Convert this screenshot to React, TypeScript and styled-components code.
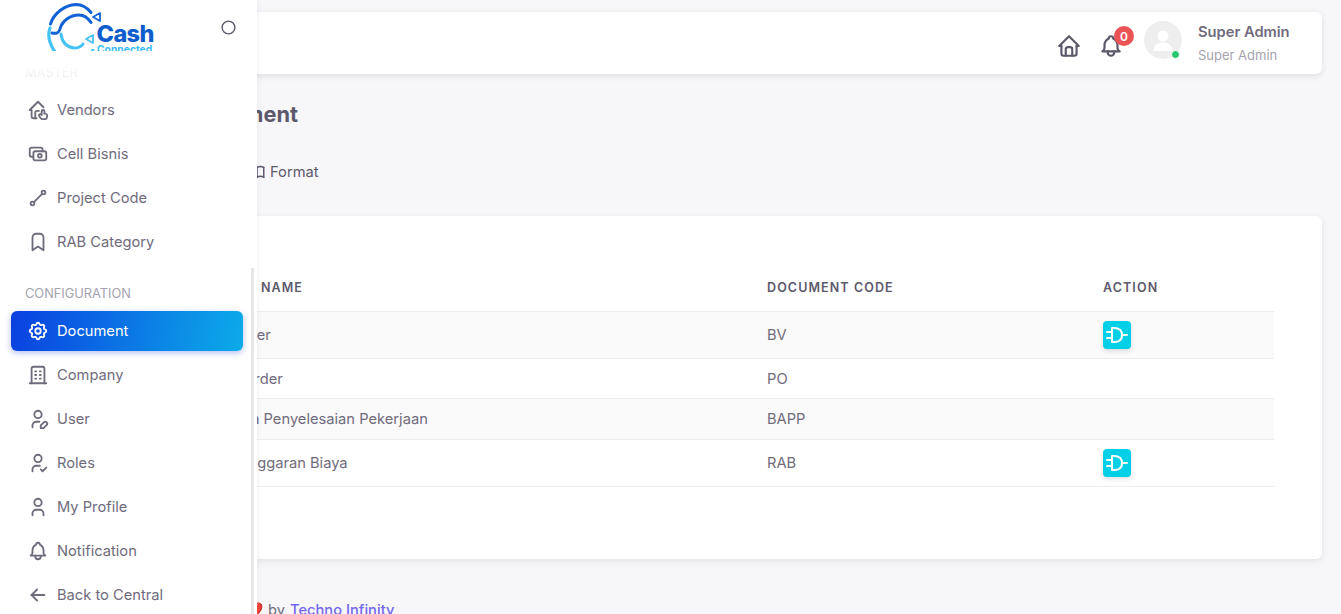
import React from "react";
import styled, { createGlobalStyle } from "styled-components";
import {
  TbHomeHand, TbCash, TbLine, TbBookmark, TbSettings, TbBuilding, TbUserEdit, TbUserCheck,
  TbUser, TbBell, TbArrowLeft, TbHome, TbCircle, TbLogicAnd, TbBook,
} from "react-icons/tb";

const Global = createGlobalStyle`
  html, body { margin: 0; padding: 0; height: 100%; overflow: hidden; background: #f7f7fa; }
  body { font-family: "Inter", "Noto Sans", sans-serif; font-size: 14.7px; color: #6f6b7d; }
  * { box-sizing: border-box; }
`;

const Page = styled.div`
  position: relative;
  height: 614px;
  overflow: hidden;
`;

const Main = styled.main`
  display: flex;
  flex-direction: column;
  padding: 12px 19px 0 106px;
`;

const Topbar = styled.header`
  height: 62px;
  flex: none;
  background: #fff;
  border-radius: 6px;
  box-shadow: 0 2px 6px rgba(47, 43, 61, 0.12);
  display: flex;
  align-items: center;
  justify-content: flex-end;
  padding-right: 32px;
`;

const TopIcon = styled.span`
  position: relative;
  display: flex;
  color: #5d596c;
  margin-right: 16px;
  margin-top: 6px;
  font-size: 26px;
`;

const Badge = styled.span`
  position: absolute;
  top: -7px;
  left: 16px;
  width: 20px;
  height: 20px;
  border-radius: 50%;
  background: #ea5455;
  color: #fff;
  font-size: 12px;
  font-weight: 600;
  display: flex;
  align-items: center;
  justify-content: center;
`;

const Avatar = styled.span`
  position: relative;
  width: 38px;
  height: 38px;
  border-radius: 50%;
  background: #eeeeee;
  display: flex;
  align-items: center;
  justify-content: center;
  margin: 0 16px 6px 4px;
`;

const OnlineDot = styled.span`
  position: absolute;
  right: 2px;
  bottom: 0;
  width: 9px;
  height: 9px;
  border-radius: 50%;
  background: #28c76f;
  border: 1px solid #fff;
`;

const UserBlock = styled.div`
  display: flex;
  flex-direction: column;
  gap: 5px;
  width: 92px;
  margin-bottom: 1px;
`;

const UserName = styled.span`
  font-size: 14.7px;
  line-height: 20px;
  font-weight: 600;
  color: #6f6b7d;
  white-space: nowrap;
`;

const UserRole = styled.span`
  font-size: 13px;
  line-height: 16px;
  color: #a5a3ae;
  white-space: nowrap;
`;

const Title = styled.h1`
  margin: 26px 0 0 82px;
  font-size: 21.8px;
  line-height: 28px;
  font-weight: 700;
  color: #5d596c;
`;

const FormatRow = styled.div`
  margin: 32px 0 0 142px;
  height: 24px;
  display: flex;
  align-items: center;
  gap: 4px;
  font-size: 14.7px;
  color: #5d596c;
`;

const Card = styled.section`
  margin-top: 32px;
  height: 343px;
  background: #fff;
  border-radius: 6px;
  box-shadow: 0 2px 6px rgba(47, 43, 61, 0.1);
  padding: 47px 48px 0 44px;
`;

const Table = styled.table`
  width: 100%;
  border-collapse: collapse;
  table-layout: fixed;
`;

const Th = styled.th<{ $w?: number }>`
  width: ${(p) => (p.$w ? `${p.$w}px` : "auto")};
  height: 48px;
  padding: 2px 24px 0;
  text-align: left;
  font-size: 12.5px;
  font-weight: 600;
  letter-spacing: 1.1px;
  text-transform: uppercase;
  color: #5d596c;
  border-bottom: 1px solid #ededf0;
`;

const Row = styled.tr<{ $striped?: boolean; $h: number }>`
  height: ${(p) => p.$h}px;
  background: ${(p) => (p.$striped ? "#fafafa" : "#fff")};
`;

const Td = styled.td`
  padding: 1px 24px 0;
  font-size: 14.7px;
  color: #6f6b7d;
  border-bottom: 1px solid #ededf0;
  white-space: nowrap;
`;

const ActionBtn = styled.span`
  width: 28px;
  height: 28px;
  border-radius: 4px;
  background: #00cfe8;
  color: #fff;
  font-size: 24px;
  display: flex;
  align-items: center;
  justify-content: center;
  box-shadow: 0 2px 4px rgba(47, 43, 61, 0.16);
`;

const Footer = styled.footer`
  margin: 41px 0 0 139px;
  font-size: 14.7px;
  line-height: 20px;
  color: #6f6b7d;
  white-space: nowrap;
  display: flex;
  align-items: center;
  gap: 5px;
`;

const FooterLink = styled.a`
  color: #7367f0;
  font-weight: 500;
`;

const Sidebar = styled.aside`
  position: absolute;
  left: 0;
  top: 0;
  bottom: 0;
  width: 257px;
  background: #fff;
  box-shadow: 0 2px 6px rgba(47, 43, 61, 0.08);
  display: flex;
  flex-direction: column;
`;

const Brand = styled.div`
  position: relative;
  height: 63px;
  flex: none;
`;

const LogoClip = styled.div`
  position: absolute;
  left: 46px;
  top: 0;
  width: 112px;
  height: 51px;
  overflow: hidden;
`;

const LogoCash = styled.span`
  position: absolute;
  left: 50.5px;
  top: 23px;
  font-size: 23.5px;
  line-height: 21px;
  font-weight: 800;
  letter-spacing: -0.6px;
  color: #0d5dcd;
`;

const LogoSub = styled.span`
  position: absolute;
  left: 51px;
  top: 44px;
  margin-top: -1px;
  font-size: 10.3px;
  line-height: 13px;
  font-weight: 700;
  color: #3cbcf6;
`;

const Toggle = styled.span`
  position: absolute;
  left: 219.5px;
  top: 19px;
  display: flex;
  font-size: 17px;
  color: #5d596c;
`;

const Menu = styled.nav`
  flex: 1;
  min-height: 0;
  position: relative;
  display: flex;
  flex-direction: column;
`;

const Fade = styled.div`
  position: absolute;
  left: 0;
  right: 0;
  top: 0;
  height: 16px;
  background: linear-gradient(#fff 20%, rgba(255, 255, 255, 0.75));
`;

const SectionLabel = styled.div<{ $top: number }>`
  margin: ${(p) => p.$top}px 0 9px 25px;
  height: 18px;
  padding-top: 2px;
  line-height: 16px;
  font-size: 12.8px;
  color: #a5a3ae;
  text-transform: uppercase;
`;

const Item = styled.a<{ $active?: boolean }>`
  flex: none;
  height: 40px;
  margin: 0 14px 4px 11px;
  padding: 0 16px;
  border-radius: 6px;
  display: flex;
  align-items: center;
  gap: 8px;
  font-size: 14.7px;
  color: ${(p) => (p.$active ? "#fff" : "#6f6b7d")};
  background: ${(p) => (p.$active ? "linear-gradient(100deg, #0a40e0, #0cabe9)" : "transparent")};
  box-shadow: ${(p) => (p.$active ? "0 2px 6px rgba(40, 70, 230, 0.35)" : "none")};
  svg { font-size: 22px; flex: none; }
`;

const ScrollThumb = styled.div`
  position: absolute;
  left: 251px;
  top: 268px;
  bottom: 0;
  width: 3px;
  background: #e6e6e8;
`;

const Logo = () => (
  <svg width="60" height="51" viewBox="46 0 60 51" fill="none" strokeLinecap="round">
    <path d="M50.500 24C54 13 65 5 76 4.500c6 0 11 3 15 8" stroke="#1162d6" strokeWidth="3" />
    <path d="M52 33c4 1 7 0 8-4 2-8 10-14 19-14 5 0 9 3 12 7.500" stroke="#1162d6" strokeWidth="3" />
    <path d="M93 17l7-4v8z" stroke="#1162d6" strokeWidth="1.800" strokeLinejoin="round" />
    <path d="M50 28c-3 8-1 15 5 24" stroke="#45c2f7" strokeWidth="3.200" />
    <path d="M61 34c1 8 6 13 13 14 4 0 7-1 9-4" stroke="#45c2f7" strokeWidth="3" />
    <path d="M86 39l7-4v8z" stroke="#45c2f7" strokeWidth="1.800" strokeLinejoin="round" />
    <path d="M92 50h1.500" stroke="#45c2f7" strokeWidth="2" />
  </svg>
);

const AvatarFigure = () => (
  <svg width="26" height="26" viewBox="0 0 26 26" fill="#fff">
    <circle cx="13" cy="9" r="5.500" />
    <path d="M3.500 24c0-5.500 4-8.500 9.500-8.500s9.500 3 9.500 8.500z" />
  </svg>
);

const upperItems = [
  { label: "Vendors", Icon: TbHomeHand },
  { label: "Cell Bisnis", Icon: TbCash },
  { label: "Project Code", Icon: TbLine },
  { label: "RAB Category", Icon: TbBookmark },
];

const lowerItems = [
  { label: "Document", Icon: TbSettings, active: true },
  { label: "Company", Icon: TbBuilding },
  { label: "User", Icon: TbUserEdit },
  { label: "Roles", Icon: TbUserCheck },
  { label: "My Profile", Icon: TbUser },
  { label: "Notification", Icon: TbBell },
  { label: "Back to Central", Icon: TbArrowLeft },
];

const rows = [
  { name: "Bank Voucher", code: "BV", h: 47, action: true, striped: true },
  { name: "Purchase Order", code: "PO", h: 40 },
  { name: "Berita Acara Penyelesaian Pekerjaan", code: "BAPP", h: 41, striped: true },
  { name: "Rencana Anggaran Biaya", code: "RAB", h: 47, action: true },
];

export default function App() {
  return (
    <Page>
      <Global />
      <Main>
        <Topbar>
          <TopIcon><TbHome /></TopIcon>
          <TopIcon>
            <TbBell />
            <Badge>0</Badge>
          </TopIcon>
          <Avatar>
            <AvatarFigure />
            <OnlineDot />
          </Avatar>
          <UserBlock>
            <UserName>Super Admin</UserName>
            <UserRole>Super Admin</UserRole>
          </UserBlock>
        </Topbar>
        <Title>Document</Title>
        <FormatRow><TbBook size={18} /> Format</FormatRow>
        <Card>
          <Table>
            <thead>
              <tr>
                <Th $w={593}>Document Name</Th>
                <Th $w={336}>Document Code</Th>
                <Th>Action</Th>
              </tr>
            </thead>
            <tbody>
              {rows.map((r) => (
                <Row key={r.code} $h={r.h} $striped={r.striped}>
                  <Td>{r.name}</Td>
                  <Td>{r.code}</Td>
                  <Td>{r.action && <ActionBtn><TbLogicAnd /></ActionBtn>}</Td>
                </Row>
              ))}
            </tbody>
          </Table>
        </Card>
        <Footer>
          <span>❤️</span> by <FooterLink>Techno Infinity</FooterLink>
        </Footer>
      </Main>
      <Sidebar>
        <Brand>
          <LogoClip>
            <Logo />
            <LogoCash>Cash</LogoCash>
            <LogoSub>Connected</LogoSub>
          </LogoClip>
          <Toggle><TbCircle /></Toggle>
        </Brand>
        <Menu>
          <SectionLabel $top={0}>Master</SectionLabel>
          {upperItems.map(({ label, Icon }) => (
            <Item key={label}><Icon /><span>{label}</span></Item>
          ))}
          <SectionLabel $top={18}>Configuration</SectionLabel>
          {lowerItems.map(({ label, Icon, active }) => (
            <Item key={label} $active={active}><Icon /><span>{label}</span></Item>
          ))}
          <Fade />
        </Menu>
        <ScrollThumb />
      </Sidebar>
    </Page>
  );
}
